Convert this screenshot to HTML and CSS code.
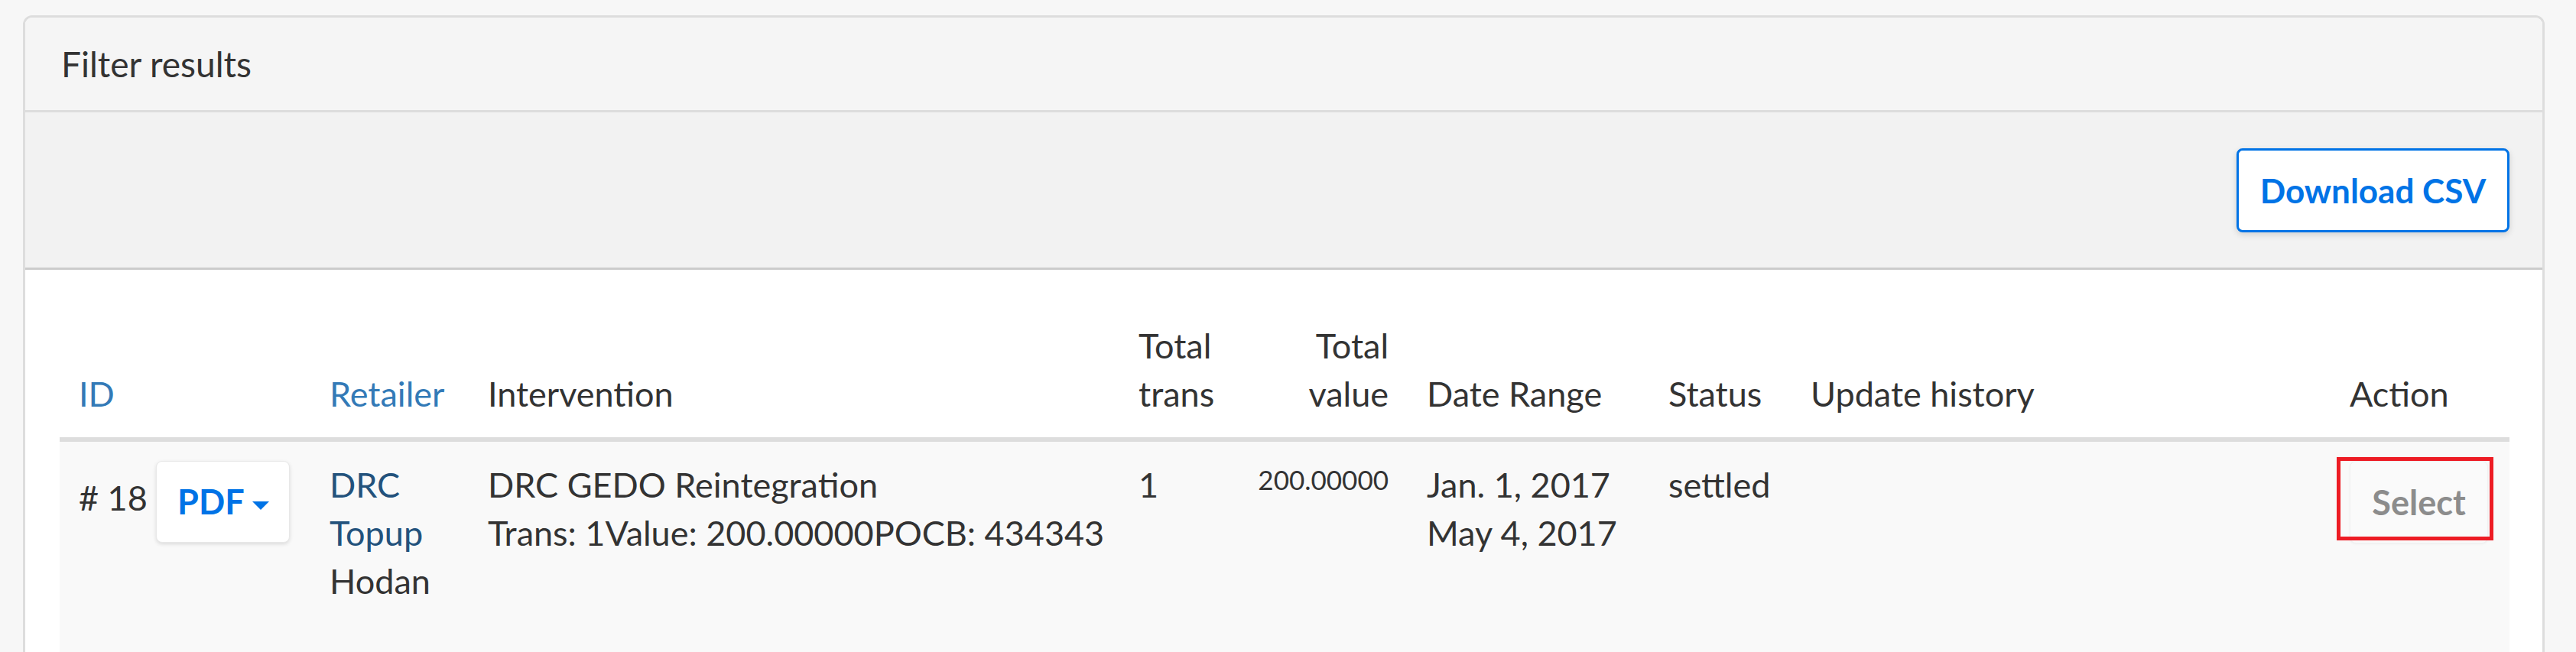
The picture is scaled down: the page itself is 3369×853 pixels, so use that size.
FILE: index.html
```html
<!DOCTYPE html>
<html lang="en">
<head>
    <meta charset="UTF-8">
    <meta name="viewport" content="width=device-width, initial-scale=1.0">
    <title>Filter results</title>
    <link rel="stylesheet" href="styles.css">
</head>
<body>
    <div class="panel">
        <div class="panel-heading">Filter results</div>

        <div class="toolbar">
            <button class="btn-download">Download CSV</button>
        </div>

        <div class="panel-body">
            <table class="results">
                <colgroup>
                    <col class="c-id">
                    <col class="c-retailer">
                    <col class="c-intervention">
                    <col class="c-trans">
                    <col class="c-value">
                    <col class="c-date">
                    <col class="c-status">
                    <col class="c-history">
                    <col class="c-action">
                </colgroup>
                <thead>
                    <tr>
                        <th><a href="#">ID</a></th>
                        <th><a href="#">Retailer</a></th>
                        <th>Intervention</th>
                        <th>Total trans</th>
                        <th class="right">Total value</th>
                        <th>Date Range</th>
                        <th>Status</th>
                        <th>Update history</th>
                        <th>Action</th>
                    </tr>
                </thead>
                <tbody>
                    <tr class="striped">
                        <td># 18 <span class="btn-group"><button class="btn-pdf">PDF<span class="caret"></span></button></span></td>
                        <td>
                            <a class="retailer" href="#">DRC Topup</a>
                            <div>Hodan</div>
                        </td>
                        <td>
                            <div>DRC GEDO Reintegration</div>
                            <div class="nowrap">Trans: 1Value: 200.00000POCB: 434343</div>
                        </td>
                        <td>1</td>
                        <td class="right"><div class="small">200.00000</div></td>
                        <td>Jan. 1, 2017<br>May 4, 2017</td>
                        <td>settled</td>
                        <td></td>
                        <td><span class="marked"><button class="btn-select" disabled>Select</button></span></td>
                    </tr>
                </tbody>
            </table>
        </div>
    </div>
</body>
</html>
```

FILE: styles.css
```css
body {
    margin: 0;
    padding: 20px 41px 0 30px;
    font-family: Lato, "Helvetica Neue", Arial, sans-serif;
    font-size: 45px;
    line-height: 63px;
    color: #333;
    background-color: #f7f7f7;
}
a {
    color: #337ab7;
    text-decoration: none;
}
button {
    font-family: inherit;
    font-size: 45px;
    line-height: 63px;
    font-weight: bold;
    cursor: pointer;
}
.panel {
    background: #fff;
    border: 3px solid #ddd;
    border-radius: 12px;
    overflow: hidden;
    height: 900px;
}
.panel-heading {
    background-color: #f5f5f5;
    font-size: 46px;
    padding: 29px 47px;
    border-bottom: 3px solid #ddd;
}
.toolbar {
    display: flex;
    justify-content: flex-end;
    background-color: #f2f2f2;
    padding: 47px 43px 46px;
    border-bottom: 3px solid #ccc;
}
.btn-download {
    width: 357px;
    height: 110px;
    padding: 0;
    font-size: 44px;
    color: #0073e6;
    background: #fff;
    border: 3px solid #0073e6;
    border-radius: 8px;
    box-shadow: 0 3px 8px rgba(0, 0, 0, 0.14);
}
.panel-body {
    padding: 43px 43px 0 45px;
}
.results {
    width: 100%;
    border-collapse: collapse;
    table-layout: fixed;
}
.c-id { width: 328px; }
.c-retailer { width: 207px; }
.c-intervention { width: 851px; }
.c-trans { width: 155px; }
.c-value { width: 222px; }
.c-date { width: 316px; }
.c-status { width: 186px; }
.c-history { width: 705px; }
.c-action { width: 234px; }
.results th {
    font-weight: normal;
    text-align: left;
    vertical-align: bottom;
    padding: 25px;
    border-bottom: 6px solid #ddd;
}
.results td {
    vertical-align: top;
    padding: 25px;
}
.results .right {
    text-align: right;
}
.striped {
    background-color: #f9f9f9;
    height: 300px;
}
.nowrap {
    white-space: nowrap;
}
.retailer {
    color: #23527c;
}
.small {
    font-size: 35px;
    line-height: 1.428571;
}
.btn-group {
    display: inline-block;
    vertical-align: middle;
}
.btn-pdf {
    height: 107px;
    width: 175px;
    padding: 0;
    color: #0073e6;
    background: #fff;
    border: 1px solid #e8e8e8;
    border-radius: 8px;
    box-shadow: 0 2px 5px rgba(0, 0, 0, 0.12);
}
.caret {
    display: inline-block;
    vertical-align: middle;
    margin-left: 10px;
    width: 0;
    height: 0;
    border-top: 11px solid #0073e6;
    border-left: 11.5px solid transparent;
    border-right: 11.5px solid transparent;
}
.marked {
    position: relative;
    display: inline-block;
}
.marked::after {
    content: "";
    position: absolute;
    left: -17px;
    top: -5px;
    width: 195px;
    height: 99px;
    border: 5px solid #ed1c24;
}
.btn-select {
    display: block;
    width: 181px;
    height: 108px;
    padding: 0;
    color: #8c8c8c;
    background: #fafafa;
    border: 1px solid #f1f1f1;
    border-radius: 8px;
    box-shadow: 0 1px 3px rgba(0, 0, 0, 0.04);
    cursor: not-allowed;
}
```
